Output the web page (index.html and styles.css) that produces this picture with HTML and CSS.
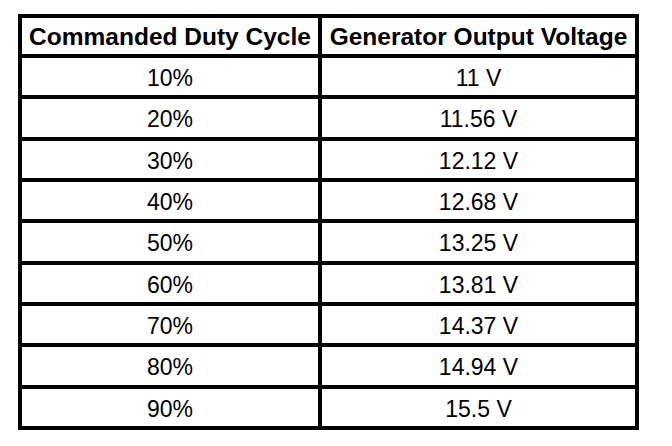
FILE: index.html
```html
<!DOCTYPE html>
<html>
<head>
<meta charset="utf-8">
<link rel="stylesheet" href="styles.css">
</head>
<body>
<div class="table">
  <div class="cell head">Commanded Duty Cycle</div>
  <div class="cell head">Generator Output Voltage</div>
  <div class="cell">10%</div><div class="cell">11 V</div>
  <div class="cell">20%</div><div class="cell">11.56 V</div>
  <div class="cell">30%</div><div class="cell">12.12 V</div>
  <div class="cell">40%</div><div class="cell">12.68 V</div>
  <div class="cell">50%</div><div class="cell">13.25 V</div>
  <div class="cell">60%</div><div class="cell">13.81 V</div>
  <div class="cell">70%</div><div class="cell">14.37 V</div>
  <div class="cell">80%</div><div class="cell">14.94 V</div>
  <div class="cell">90%</div><div class="cell">15.5 V</div>
</div>
</body>
</html>
```
FILE: styles.css
```css
html, body {
  margin: 0;
  padding: 0;
  background: #fff;
}
body {
  font-family: "Liberation Sans", Arial, sans-serif;
  color: #000;
}
.table {
  margin: 14px 0 0 18px;
  width: 621px;
  height: 416px;
  box-sizing: border-box;
  padding: 4px;
  background: #000;
  display: grid;
  grid-template-columns: 296px 313px;
  grid-template-rows: 36px repeat(9, 1fr);
  gap: 4px;
}
.cell {
  background: #fff;
  display: flex;
  align-items: center;
  justify-content: center;
  font-size: 23px;
  padding-top: 4px;
  box-sizing: border-box;
  line-height: 1;
  white-space: nowrap;
}
.head {
  font-weight: bold;
  font-size: 24.5px;
  padding-top: 3px;
}
```
